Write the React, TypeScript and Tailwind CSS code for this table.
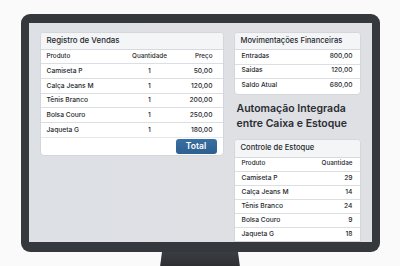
import React from "react";

const sales = [
  ["Camiseta P", "1", "50,00"],
  ["Calça Jeans M", "1", "120,00"],
  ["Tênis Branco", "1", "200,00"],
  ["Bolsa Couro", "1", "250,00"],
  ["Jaqueta G", "1", "180,00"],
];

const fin = [
  ["Entradas", "800,00"],
  ["Saídas", "120,00"],
  ["Saldo Atual", "680,00"],
];

const stock = [
  ["Camiseta P", "29"],
  ["Calça Jeans M", "14"],
  ["Tênis Branco", "24"],
  ["Bolsa Couro", "9"],
  ["Jaqueta G", "18"],
];

export default function App() {
  return (
    <div
      className="w-[400px] h-[266px] bg-[#fafafa] overflow-hidden flex flex-col items-center pt-[14px]"
      style={{ fontFamily: "Inter, 'Noto Sans', sans-serif" }}
    >
      <div className="w-[359px] h-[238px] rounded-[9px] bg-[#35383d] px-[8px] pt-[9px] pb-[10px] shrink-0">
        <div className="w-full h-full bg-gradient-to-r from-[#dde0e5] to-[#dfe0e3] overflow-hidden flex gap-[10px] pl-[11px] pr-[10px] pt-[9px] text-[#25282c]">
          {/* Sales card */}
          <div className="w-[184px] h-[124px] shrink-0 bg-white border border-[#d3d6da] rounded-[4px] flex flex-col overflow-hidden">
            <div className="h-[17px] shrink-0 bg-[#f4f5f7] border-b border-[#d6d9dd] flex items-center px-[6px] text-[7.9px] font-medium">
              Registro de Vendas
            </div>
            <div className="h-[14px] shrink-0 border-b border-[#dcdee2] flex items-center pl-[6px] pr-[10px] text-[6.3px] font-medium">
              <span className="flex-1">Produto</span>
              <span className="w-[54px] text-center">Quantidade</span>
              <span className="w-[36px] text-right">Preço</span>
            </div>
            {sales.map(([p, q, v], i) => (
              <div
                key={i}
                className={`h-[14.8px] shrink-0 flex items-center pl-[6px] pr-[10px] text-[6.7px] font-medium ${
                  i < sales.length - 1 ? "border-b border-[#dcdee2]" : "border-b border-[#e6e8eb]"
                }`}
              >
                <span className="flex-1">{p}</span>
                <span className="w-[54px] text-center">{q}</span>
                <span className="w-[36px] text-right">{v}</span>
              </div>
            ))}
            <div className="flex-1 flex items-center justify-end pr-[6px]">
              <div className="w-[41px] h-[15px] rounded-[3px] bg-gradient-to-b from-[#3a6fa2] to-[#2d5f90] text-white text-[8.5px] font-semibold flex items-center justify-center">
                Total
              </div>
            </div>
          </div>

          {/* Right column */}
          <div className="w-[127px] shrink-0 flex flex-col">
            <div className="bg-white border border-[#d3d6da] rounded-[4px] overflow-hidden">
              <div className="h-[17px] bg-[#f4f5f7] border-b border-[#d6d9dd] flex items-center px-[6px] text-[7.6px] font-medium">
                Movimentações Financeiras
              </div>
              {fin.map(([l, v], i) => (
                <div
                  key={i}
                  className={`h-[14.5px] flex items-center justify-between px-[7px] text-[6.6px] font-medium ${
                    i < fin.length - 1 ? "border-b border-[#dcdee2]" : ""
                  }`}
                >
                  <span>{l}</span>
                  <span>{v}</span>
                </div>
              ))}
            </div>
            <div className="mt-[6px] pl-[3px] text-[10.5px] leading-[15px] font-semibold text-[#2a2d33]">
              Automação Integrada
              <br />
              entre Caixa e Estoque
            </div>
            <div className="mt-[8px] bg-white border border-[#d3d6da] rounded-t-[4px] overflow-hidden flex-1">
              <div className="h-[18px] bg-[#f4f5f7] border-b border-[#d6d9dd] flex items-center px-[6px] text-[7.6px] font-medium">
                Controle de Estoque
              </div>
              <div className="h-[14px] border-b border-[#dcdee2] flex items-center justify-between px-[7px] text-[6.3px] font-medium">
                <span>Produto</span>
                <span>Quantidae</span>
              </div>
              {stock.map(([p, q], i) => (
                <div
                  key={i}
                  className="h-[14px] border-b border-[#dcdee2] flex items-center justify-between px-[7px] text-[6.7px] font-medium"
                >
                  <span>{p}</span>
                  <span>{q}</span>
                </div>
              ))}
            </div>
          </div>
        </div>
      </div>
      <div className="w-[80px] h-[15px] shrink-0 bg-gradient-to-b from-[#3a3d42] to-[#2c2e32] [clip-path:polygon(2.5%_0,97.5%_0,100%_100%,0_100%)]" />
    </div>
  );
}
